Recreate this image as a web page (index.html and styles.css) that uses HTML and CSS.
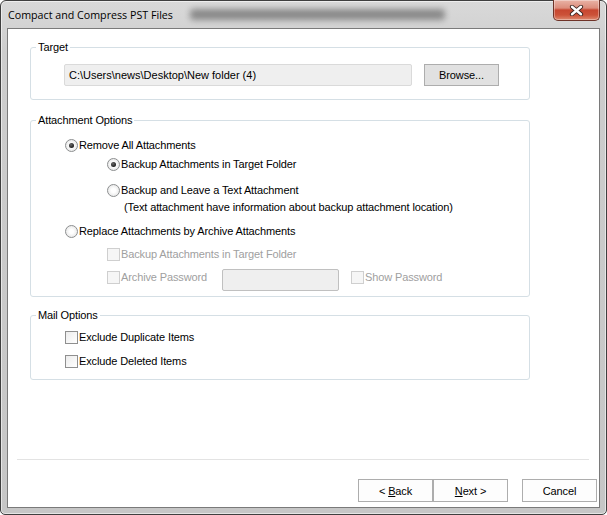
FILE: index.html
```html
<!DOCTYPE html>
<html>
<head>
<meta charset="utf-8">
<link rel="stylesheet" href="styles.css">
</head>
<body>
<div class="window">
  <div class="titlebar">
    <span class="title">Compact and Compress PST Files</span>
    <span class="blur"></span>
    <span class="close">
      <svg width="15" height="11" viewBox="0 0 15 11">
        <path d="M3 1.8 L12 9.2 M12 1.8 L3 9.2" stroke="#3a2420" stroke-width="4.2" stroke-linecap="round"/>
        <path d="M3 1.8 L12 9.2 M12 1.8 L3 9.2" stroke="#ffffff" stroke-width="2.4" stroke-linecap="round"/>
      </svg>
    </span>
  </div>
  <div class="client">
    <div class="group group-target">
      <div class="group-title">Target</div>
      <div class="target-row">
        <div class="path-box">C:\Users\news\Desktop\New folder (4)</div>
        <div class="btn btn-browse">Browse...</div>
      </div>
    </div>

    <div class="group group-attach">
      <div class="group-title">Attachment Options</div>
      <div class="row r1 lvl1"><span class="radio checked"></span><span class="lbl">Remove All Attachments</span></div>
      <div class="row r2 lvl2"><span class="radio checked"></span><span class="lbl">Backup Attachments in Target Folder</span></div>
      <div class="row r3 lvl2"><span class="radio"></span><span class="lbl">Backup and Leave a Text Attachment</span></div>
      <div class="row r3b note">(Text attachment have information about backup attachment location)</div>
      <div class="row r4 lvl1"><span class="radio"></span><span class="lbl">Replace Attachments by Archive Attachments</span></div>
      <div class="row r5 lvl2 disabled"><span class="check dis"></span><span class="lbl">Backup Attachments in Target Folder</span></div>
      <div class="row r6 lvl2 disabled">
        <span class="check dis"></span><span class="lbl pw-lbl">Archive Password</span>
        <span class="pw-box"></span>
        <span class="check dis"></span><span class="lbl show-lbl">Show Password</span>
      </div>
    </div>

    <div class="group group-mail">
      <div class="group-title">Mail Options</div>
      <div class="row m1 lvl1"><span class="check"></span><span class="lbl">Exclude Duplicate Items</span></div>
      <div class="row m2 lvl1"><span class="check"></span><span class="lbl">Exclude Deleted Items</span></div>
    </div>

    <div class="spacer"></div>
    <div class="separator"></div>
    <div class="buttons">
      <div class="btn btn-nav">&lt;&nbsp;<u>B</u>ack</div>
      <div class="btn btn-nav"><u>N</u>ext&nbsp;&gt;</div>
      <div class="btn btn-nav btn-cancel">Cancel</div>
    </div>
  </div>
</div>
</body>
</html>
```
FILE: styles.css
```css
* { box-sizing: border-box; }
html, body { margin: 0; padding: 0; background: #ffffff; }
body {
  font-family: "Liberation Sans", Arial, sans-serif;
  font-size: 11px;
  letter-spacing: -0.12px;
  color: #000;
}
.window {
  width: 607px;
  height: 515px;
  border: 1px solid #3f3f3f;
  border-radius: 6px 6px 5px 5px;
  background: linear-gradient(to bottom, #d9d9d9 0%, #cdcdcd 10%, #c6c6c6 100%);
  box-shadow: inset 0 0 0 1px rgba(255,255,255,0.55);
  padding: 0 6px 6px 6px;
  display: flex;
  flex-direction: column;
}
.titlebar {
  height: 27px;
  display: flex;
  align-items: center;
  flex: none;
}
.title {
  font-family: "Open Sans", "Noto Sans", sans-serif;
  font-size: 10.7px;
  letter-spacing: 0;
  color: #000;
  width: 183px;
  padding-left: 1px;
  white-space: nowrap;
  margin-top: 1px;
}
.blur {
  width: 255px;
  height: 11px;
  background: #7c7c7c;
  filter: blur(3px);
  border-radius: 4px;
  opacity: 0.85;
}
.close {
  margin-left: auto;
  align-self: flex-start;
  margin-top: -1px;
  width: 47px;
  height: 21px;
  border: 1px solid #6e3328;
  border-top: none;
  border-radius: 0 0 5px 5px;
  background: linear-gradient(to bottom, #e9b3a6 0%, #dc8d7c 40%, #c74630 50%, #cc5238 75%, #de8a70 100%);
  box-shadow: inset 0 0 0 1px rgba(255,255,255,0.35);
  display: flex;
  align-items: center;
  justify-content: center;
}
.client {
  flex: 1;
  background: #fff;
  border: 1px solid #7a7a7a;
  display: flex;
  flex-direction: column;
}
.group {
  margin-left: 22px;
  width: 500px;
  border: 1px solid #d5dfe5;
  border-radius: 3px;
}
.group-title {
  width: fit-content;
  margin: -7px 0 0 5px;
  padding: 0 2px;
  background: #fff;
  line-height: 13px;
  height: 13px;
}
.group-target { margin-top: 18px; padding-bottom: 13px; }
.group-attach { margin-top: 20px; padding-bottom: 5px; }
.group-mail { margin-top: 18px; padding-bottom: 10px; }

.target-row {
  display: flex;
  margin-top: 10px;
  margin-left: 33px;
}
.path-box {
  width: 348px;
  height: 22px;
  background: #efefef;
  border: 1px solid #dadada;
  border-radius: 2px;
  padding-left: 4px;
  line-height: 20px;
  white-space: nowrap;
  letter-spacing: 0;
}
.btn {
  height: 23px;
  width: 75px;
  border: 1px solid #adadad;
  display: flex;
  align-items: center;
  justify-content: center;
  color: #000;
}
.btn-browse {
  height: 22px;
  margin-left: 12px;
  background: #e1e1e1;
}
.row {
  display: flex;
  align-items: center;
  height: 16px;
  line-height: 16px;
  white-space: nowrap;
}
.lvl1 { padding-left: 34px; }
.lvl2 { padding-left: 76px; }
.lbl { margin-left: 1px; }
.r1 { margin-top: 10px; }
.r2 { margin-top: 3px; }
.r3 { margin-top: 10px; }
.r3b { margin-top: 1px; padding-left: 93px; }
.r4 { margin-top: 8px; }
.r5 { margin-top: 7px; }
.r6 { margin-top: 7px; height: 22px; align-items: flex-start; }
.r6 .check { margin-top: 2px; }
.m1 { margin-top: 7px; }
.m2 { margin-top: 8px; }
.disabled { color: #a0a0a0; }

.radio {
  width: 13px;
  height: 13px;
  border-radius: 50%;
  border: 1px solid #8c8e8f;
  background: radial-gradient(circle at 50% 50%, #ffffff 0 2px, #eeeeee 5px);
  display: flex;
  align-items: center;
  justify-content: center;
  flex: none;
}
.radio.checked::after {
  content: "";
  width: 5px;
  height: 5px;
  border-radius: 50%;
  background: radial-gradient(circle at 40% 35%, #6a6a6a 0, #1e1e1e 70%);
}
.check {
  width: 13px;
  height: 13px;
  border: 1px solid #8f8f8f;
  background: linear-gradient(135deg, #ececec 0%, #ffffff 100%);
  flex: none;
}
.check.dis {
  border-color: #cfcfcf;
  background: #f6f6f6;
}
.pw-lbl { width: 101px; }
.pw-box {
  width: 117px;
  height: 22px;
  border: 1px solid #c0c0c0;
  border-radius: 2px;
  background: #efefef;
}
.r6 .pw-box + .check { margin-left: 12px; }

.spacer { flex: 1; }
.separator {
  height: 1px;
  background: #e3e3e3;
  margin: 0 10px 0 9px;
}
.buttons {
  display: flex;
  justify-content: flex-end;
  margin-top: 19px;
  margin-bottom: 5px;
  padding-right: 2px;
}
.btn-nav { background: #fdfdfd; }
.btn-cancel { margin-left: 14px; }
u { text-decoration: underline; text-underline-offset: 1px; }
```
